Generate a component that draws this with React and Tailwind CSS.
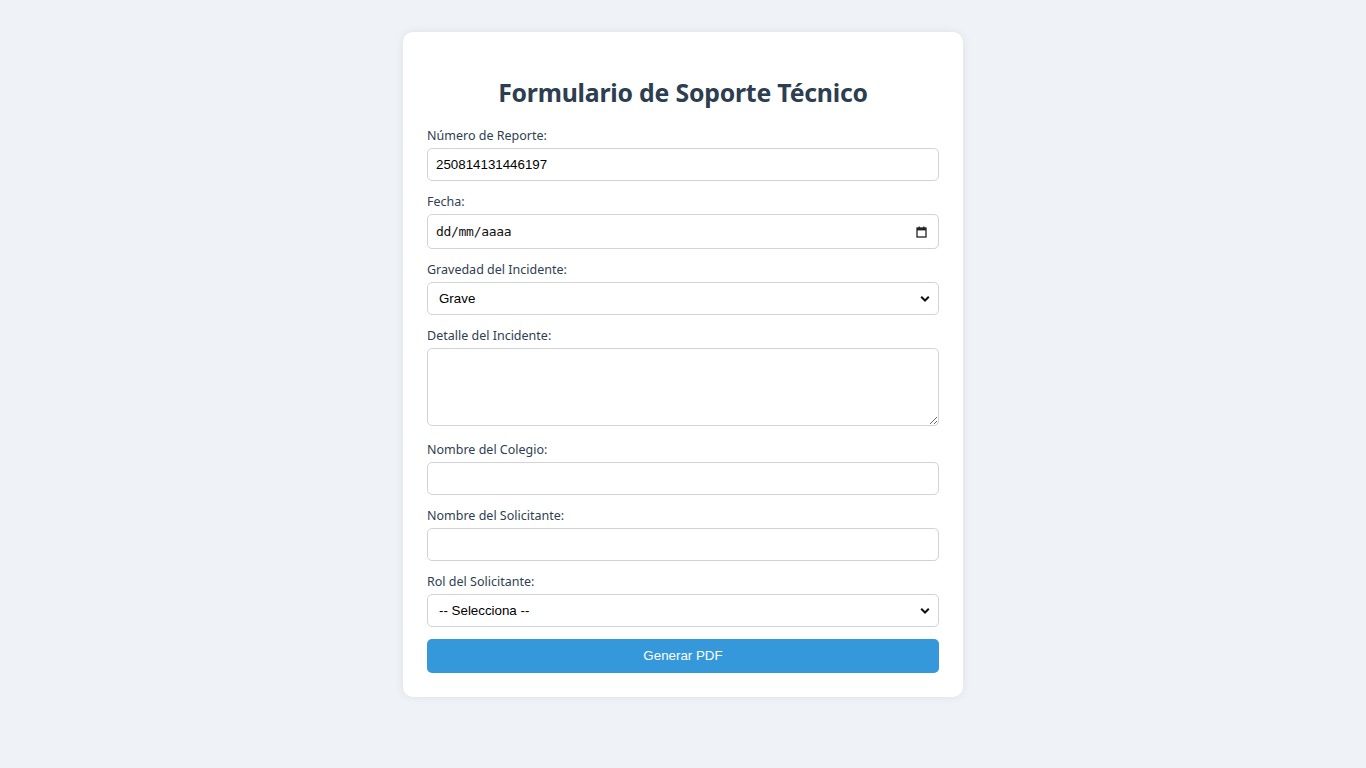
import React from "react";

const labelCls =
  "block text-[12.5px] leading-[20px] text-[#2f4052] font-['Noto_Sans',sans-serif]";
const inputCls =
  "block w-full mt-[2px] h-[33px] px-[8px] border border-[#d0d4d9] rounded-[5px] bg-white text-[13.333px] text-black font-['Liberation_Sans',Arial,sans-serif] outline-none";

function Chevron() {
  return (
    <svg
      className="absolute right-[9px] top-1/2 -translate-y-1/2 pointer-events-none"
      width="10"
      height="7"
      viewBox="0 0 10 7"
    >
      <path d="M1.2 1.3 L5 5 L8.8 1.3" fill="none" stroke="#111" strokeWidth="2" />
    </svg>
  );
}

export default function App() {
  return (
    <div className="min-h-[768px] bg-[#eff2f7] flex justify-center pt-[32px] font-['Noto_Sans',sans-serif]">
      <div className="w-[560px] h-[665px] bg-white rounded-[10px] shadow-[0_0_10px_rgba(0,0,0,0.08)] px-[24px] pt-[24px]">
        <h2 className="mt-[20px] mb-[18px] text-center text-[24.8px] leading-[32px] font-bold text-[#2c3e50] font-['Noto_Sans',sans-serif] tracking-[-0.2px]">
          Formulario de Soporte Técnico
        </h2>

        <label className={labelCls}>Número de Reporte:</label>
        <input className={inputCls} defaultValue="250814131446197" />

        <label className={labelCls + " mt-[11px]"}>Fecha:</label>
        <div className="relative mt-[2px] h-[35px] w-full border border-[#d0d4d9] rounded-[5px] bg-white flex items-center px-[8px] text-[13px] text-[#111] font-['DejaVu_Sans_Mono',monospace]">
          <span className="tracking-[-0.3px]">dd/mm/aaaa</span>
          <svg
            className="absolute right-[11px] top-1/2 -translate-y-1/2"
            width="11"
            height="12"
            viewBox="0 0 11 12"
          >
            <rect x="1" y="2" width="9" height="9" fill="none" stroke="#222" strokeWidth="1.3" />
            <rect x="1" y="2" width="9" height="2.4" fill="#222" />
            <rect x="2.5" y="0.5" width="1.3" height="2" fill="#222" />
            <rect x="7.2" y="0.5" width="1.3" height="2" fill="#222" />
          </svg>
        </div>

        <label className={labelCls + " mt-[11px]"}>Gravedad del Incidente:</label>
        <div className="relative mt-[2px]">
          <select
            className={inputCls + " appearance-none mt-0 pl-[11px]"}
            defaultValue="Grave"
          >
            <option>Leve</option>
            <option>Moderado</option>
            <option>Grave</option>
          </select>
          <Chevron />
        </div>

        <label className={labelCls + " mt-[11px]"}>Detalle del Incidente:</label>
        <textarea className="block w-full mt-[2px] h-[78px] px-[8px] py-[6px] border border-[#d0d4d9] rounded-[5px] bg-white text-[13.333px] font-['Liberation_Sans',Arial,sans-serif] outline-none" />

        <label className={labelCls + " mt-[14px]"}>Nombre del Colegio:</label>
        <input className={inputCls} />

        <label className={labelCls + " mt-[11px]"}>Nombre del Solicitante:</label>
        <input className={inputCls} />

        <label className={labelCls + " mt-[11px]"}>Rol del Solicitante:</label>
        <div className="relative mt-[2px]">
          <select
            className={inputCls + " appearance-none mt-0 pl-[11px]"}
            defaultValue=""
          >
            <option value="">-- Selecciona --</option>
            <option>Docente</option>
            <option>Directivo</option>
            <option>Administrativo</option>
          </select>
          <Chevron />
        </div>

        <button className="mt-[12px] w-full h-[34px] bg-[#3498db] text-white text-[13.333px] rounded-[5px] font-['Liberation_Sans',Arial,sans-serif]">
          Generar PDF
        </button>
      </div>
    </div>
  );
}
